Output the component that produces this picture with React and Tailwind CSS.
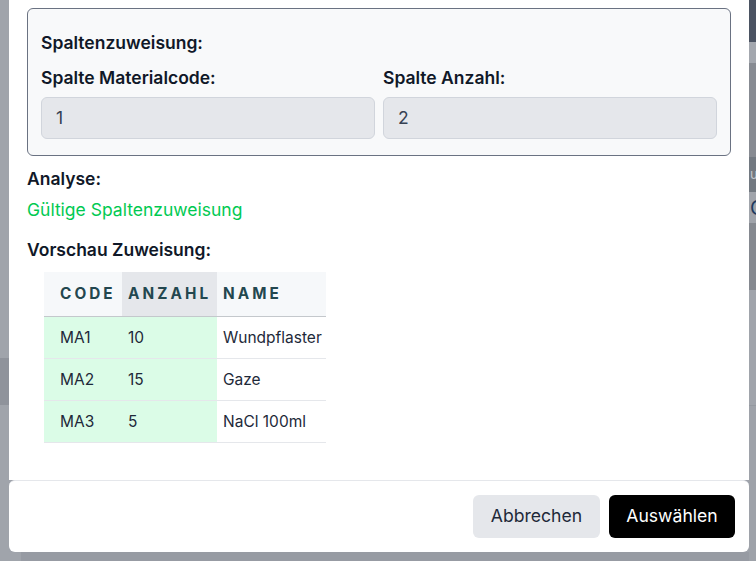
import React from 'react'

const rows = [
  { code: 'MA1', anzahl: '10', name: 'Wundpflaster' },
  { code: 'MA2', anzahl: '15', name: 'Gaze' },
  { code: 'MA3', anzahl: '5', name: 'NaCl 100ml' },
]

function Backdrop() {
  // the page behind the modal, dimmed by the overlay
  return (
    <div className="flex h-[561px] w-[756px]">
      <div className="flex w-[9px] flex-col">
        <div className="h-[358px] bg-[#a0a4ab]" />
        <div className="h-[47px] bg-[#8f939b]" />
        <div className="flex-1 bg-[#a0a4ab]" />
      </div>
      <div className="flex flex-1 flex-col">
        <div className="flex-1" />
        <div className="flex h-[9px]">
          <div className="w-[12px] bg-[#a0a4ab]" />
          <div className="flex-1 bg-[#979ba3]" />
        </div>
      </div>
      <div className="flex w-[7px] flex-col overflow-hidden text-[#c3c7cc]">
        <div className="h-[42px] bg-[#4b5362]" />
        <div className="h-[21px] bg-[#a3a7ae]" />
        <div className="h-[94px] bg-[#878b92]" />
        <div className="flex h-[35px] items-center bg-[#727981] pl-[1px] text-[13px] leading-none">u</div>
        <div className="flex h-[31px] items-center bg-[#a0a4ab] pl-[1px] text-[20px] leading-none text-[#1e3a5f]">C</div>
        <div className="h-[67px] bg-[#858990]" />
        <div className="h-[115px] bg-[#a0a4ab]" />
        <div className="flex-1 border-t border-[#9499a0] bg-[#9ea2a9]" />
      </div>
    </div>
  )
}

export default function App() {
  return (
    <div
      className="relative h-[561px] w-[756px] overflow-hidden bg-[#9fa3ab]"
      style={{ fontFamily: 'Inter, "Noto Sans", sans-serif' }}
    >
      <Backdrop />

      <div className="absolute left-[9px] top-[-10px] w-[740px]">
        <div className="bg-white px-[18px] pb-[37px] pt-[18px] text-[17.5px] leading-6">
          <div className="rounded-md border border-gray-500 bg-[#f8f9fa] px-[13px] pb-[16px] pt-[22px]">
            <div className="font-semibold text-gray-900">Spaltenzuweisung:</div>
            <div className="mt-[11px] grid grid-cols-2 gap-2">
              <div>
                <div className="font-semibold text-gray-900">Spalte Materialcode:</div>
                <div className="mt-[7px] flex h-[42px] items-center rounded-md border border-gray-300 bg-gray-200 px-[14px] text-gray-700">
                  1
                </div>
              </div>
              <div>
                <div className="font-semibold text-gray-900">Spalte Anzahl:</div>
                <div className="mt-[7px] flex h-[42px] items-center rounded-md border border-gray-300 bg-gray-200 px-[14px] text-gray-700">
                  2
                </div>
              </div>
            </div>
          </div>

          <div className="mt-[11px] font-semibold text-gray-900">Analyse:</div>
          <div className="mt-[7px] text-green-500">Gültige Spaltenzuweisung</div>
          <div className="mt-[16px] font-semibold text-gray-900">Vorschau Zuweisung:</div>

          <table className="ml-[17px] mt-[10px] w-[282px] table-fixed border-collapse text-left">
            <thead>
              <tr className="h-[44px] border-b border-[#c4c8cc] bg-[#f6f8fa] text-[15.3px] uppercase tracking-[0.2em] text-[#23474f]">
                <th className="w-[78px] pl-4 font-bold">Code</th>
                <th className="w-[95px] overflow-hidden whitespace-nowrap bg-gray-200 pl-1.5 font-bold">Anzahl</th>
                <th className="w-[109px] pl-1.5 font-bold">Name</th>
              </tr>
            </thead>
            <tbody className="text-[15.5px] text-gray-800">
              {rows.map(r => (
                <tr key={r.code} className="h-[42px] border-b border-gray-200">
                  <td className="bg-green-100 pl-4 pt-[2px]">{r.code}</td>
                  <td className="bg-green-100 pl-1.5 pt-[2px]">{r.anzahl}</td>
                  <td className="whitespace-nowrap pl-1.5 pt-[2px]">{r.name}</td>
                </tr>
              ))}
            </tbody>
          </table>
        </div>

        <div className="flex h-[72px] items-center justify-end gap-[9px] rounded-md border-t border-gray-200 bg-white pr-[14px]">
          <button className="h-[43px] w-[127px] rounded-md bg-gray-200 text-[17.6px] text-gray-800">Abbrechen</button>
          <button className="h-[43px] w-[126px] rounded-md bg-black text-[17.6px] text-white">Auswählen</button>
        </div>
      </div>
    </div>
  )
}
